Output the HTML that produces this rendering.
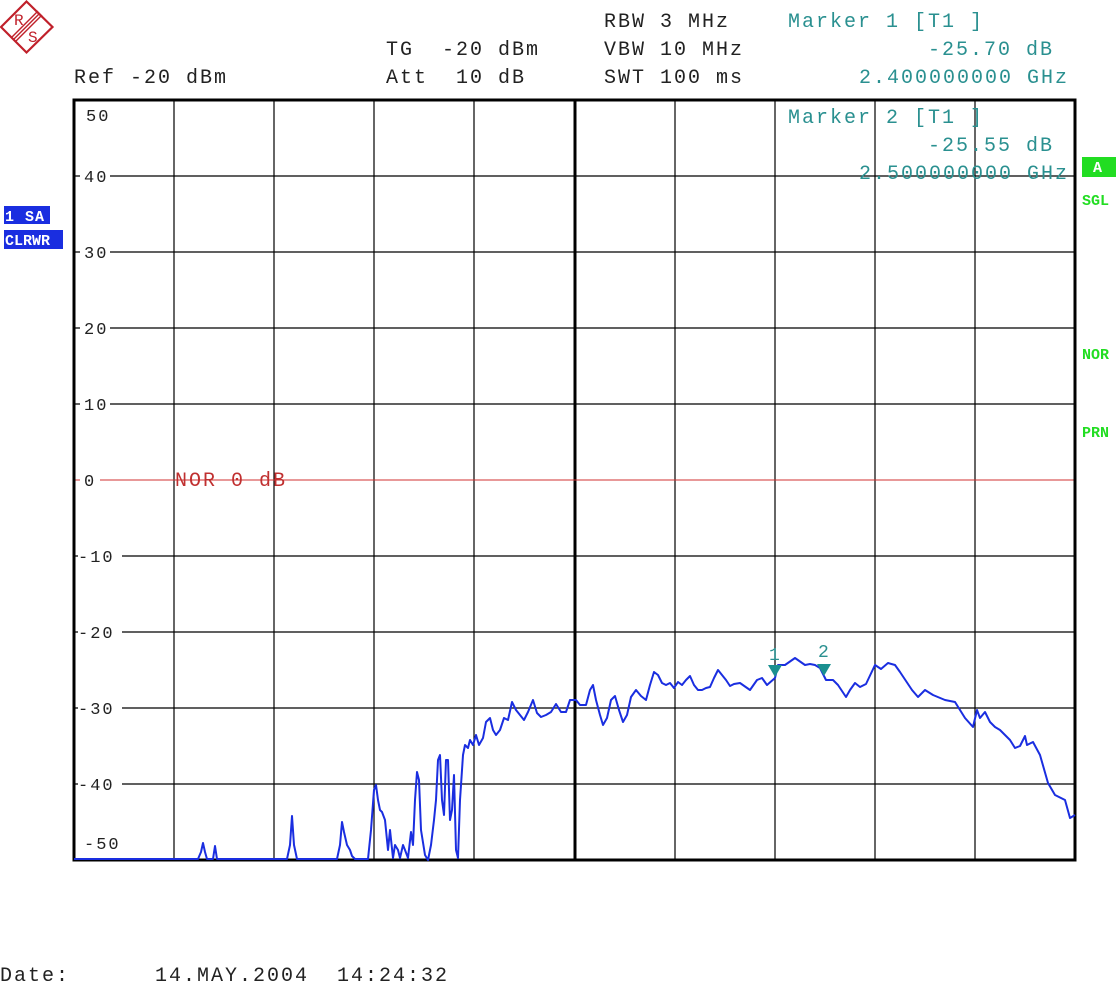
<!DOCTYPE html>
<html><head><meta charset="utf-8"><style>
html,body{margin:0;padding:0;background:#fff;width:1120px;height:986px;overflow:hidden}
svg text{font-family:"Liberation Mono",monospace;font-size:20px;letter-spacing:2px;white-space:pre}
</style></head><body>
<svg width="1120" height="986" viewBox="0 0 1120 986" xmlns="http://www.w3.org/2000/svg" xml:space="preserve">
<!-- logo -->
<polygon points="26.5,1.5 52.5,27 26.5,52.5 1,27" fill="none" stroke="#c0202a" stroke-width="2.2"/>
<g stroke="#c0202a" stroke-width="1.4">
<line x1="11" y1="38" x2="38" y2="11"/><line x1="13" y1="40" x2="40" y2="13"/><line x1="15" y1="42" x2="42" y2="15"/>
</g>
<text x="14" y="25" fill="#c0202a" style="font-size:16px;letter-spacing:0">R</text>
<text x="28" y="42" fill="#c0202a" style="font-size:16px;letter-spacing:0">S</text>

<!-- header -->
<g fill="#222">
<text x="74" y="83">Ref -20 dBm</text>
<text x="386" y="55">TG  -20 dBm</text>
<text x="386" y="83">Att  10 dB</text>
<text x="604" y="27">RBW 3 MHz</text>
<text x="604" y="55">VBW 10 MHz</text>
<text x="604" y="83">SWT 100 ms</text>
<text x="0" y="981">Date:</text>
<text x="155" y="981">14.MAY.2004  14:24:32</text>
</g>

<!-- grid -->
<g stroke="#000" stroke-width="1.2">
<line x1="174" y1="100" x2="174" y2="860"/><line x1="274" y1="100" x2="274" y2="860"/>
<line x1="374" y1="100" x2="374" y2="860"/><line x1="474" y1="100" x2="474" y2="860"/>
<line x1="675" y1="100" x2="675" y2="860"/><line x1="775" y1="100" x2="775" y2="860"/>
<line x1="875" y1="100" x2="875" y2="860"/><line x1="975" y1="100" x2="975" y2="860"/>
<line x1="74" y1="176" x2="1075" y2="176"/><line x1="74" y1="252" x2="1075" y2="252"/>
<line x1="74" y1="328" x2="1075" y2="328"/><line x1="74" y1="404" x2="1075" y2="404"/>
<line x1="74" y1="556" x2="1075" y2="556"/><line x1="74" y1="632" x2="1075" y2="632"/>
<line x1="74" y1="708" x2="1075" y2="708"/><line x1="74" y1="784" x2="1075" y2="784"/>
</g>
<line x1="575" y1="100" x2="575" y2="860" stroke="#000" stroke-width="3"/>
<line x1="74" y1="480" x2="1075" y2="480" stroke="#d03030" stroke-width="1"/>
<rect x="74" y="100" width="1001" height="760" fill="none" stroke="#000" stroke-width="3"/>

<!-- y labels -->
<g fill="#222">
<text x="86" y="121" style="font-size:17px">50</text>
<rect x="80" y="168" width="30" height="16" fill="#fff"/><text x="84" y="182" style="font-size:17px">40</text>
<rect x="80" y="244" width="30" height="16" fill="#fff"/><text x="84" y="258" style="font-size:17px">30</text>
<rect x="80" y="320" width="30" height="16" fill="#fff"/><text x="84" y="334" style="font-size:17px">20</text>
<rect x="80" y="396" width="30" height="16" fill="#fff"/><text x="84" y="410" style="font-size:17px">10</text>
<rect x="80" y="472" width="20" height="16" fill="#fff"/><text x="84" y="486" style="font-size:17px">0</text>
<rect x="78" y="548" width="44" height="16" fill="#fff"/><text x="78" y="562" style="font-size:17px">-10</text>
<rect x="78" y="624" width="44" height="16" fill="#fff"/><text x="78" y="638" style="font-size:17px">-20</text>
<rect x="78" y="700" width="44" height="16" fill="#fff"/><text x="78" y="714" style="font-size:17px">-30</text>
<rect x="78" y="776" width="44" height="16" fill="#fff"/><text x="78" y="790" style="font-size:17px">-40</text>
<text x="84" y="849" style="font-size:17px">-50</text>
</g>
<text x="175" y="486" fill="#c03030">NOR 0 dB</text>

<!-- markers text -->
<g fill="#2a9090">
<text x="788" y="27">Marker 1 [T1 ]</text>
<text x="1054" y="55" text-anchor="end">-25.70 dB</text>
<text x="1069" y="83" text-anchor="end">2.400000000 GHz</text>
<text x="788" y="123">Marker 2 [T1 ]</text>
<text x="1054" y="151" text-anchor="end">-25.55 dB</text>
<text x="1069" y="179" text-anchor="end">2.500000000 GHz</text>
</g>

<!-- side labels -->
<rect x="4" y="206" width="46" height="18" fill="#1a2ee0"/>
<text x="5" y="221" fill="#fff" style="font-size:15px;font-weight:bold;letter-spacing:1px">1 SA</text>
<rect x="4" y="230" width="59" height="19" fill="#1a2ee0"/>
<text x="5" y="245" fill="#fff" style="font-size:15px;font-weight:bold;letter-spacing:0">CLRWR</text>
<rect x="1082" y="157" width="34" height="20" fill="#22dd22"/>
<text x="1093" y="172" fill="#fff" style="font-size:15px;font-weight:bold;letter-spacing:0">A</text>
<g fill="#22dd22">
<text x="1082" y="205" style="font-size:15px;font-weight:bold;letter-spacing:0">SGL</text>
<text x="1082" y="359" style="font-size:15px;font-weight:bold;letter-spacing:0">NOR</text>
<text x="1082" y="437" style="font-size:15px;font-weight:bold;letter-spacing:0">PRN</text>
</g>

<!-- trace -->
<polyline fill="none" stroke="#1a2ee0" stroke-width="2" stroke-linejoin="round" points="74,859 198,859 201,852 203,843 205,852 207,859 213,859 215,846 217,859 287,859 290,845 292,816 294,845 297,859 337,859 340,845 342,822 344,832 347,845 350,850 352,856 355,859 368,859 371,830 374,790 376,785 378,800 380,810 382,812 385,820 388,850 390,830 393,858 395,845 398,850 400,858 403,845 405,850 408,858 411,832 413,845 415,800 417,772 419,780 421,830 425,855 428,860 431,845 434,820 436,800 438,760 440,755 442,800 444,815 446,760 448,760 450,820 452,810 454,775 456,850 458,858 460,800 463,755 465,745 468,748 470,740 473,745 476,735 479,745 483,738 486,722 490,718 493,730 496,735 500,730 504,718 508,720 512,702 516,710 520,715 524,720 528,712 533,700 537,713 541,717 546,715 551,712 556,704 561,712 566,712 570,700 576,700 580,705 586,705 590,690 593,685 596,700 600,715 603,725 607,718 611,700 615,696 619,710 623,722 627,715 631,697 636,690 641,696 646,700 650,685 654,672 658,675 662,683 666,685 670,683 674,688 678,682 682,685 686,680 690,676 694,685 698,690 702,690 706,688 710,687 714,678 718,670 722,675 726,680 730,686 734,684 740,683 750,690 757,680 762,678 767,685 775,678 778,665 785,665 795,658 805,665 810,664 815,665 820,668 826,680 833,680 838,685 846,697 850,690 855,683 860,687 866,684 875,665 881,669 888,663 895,665 900,672 912,690 918,697 925,690 933,695 945,700 955,702 965,718 973,727 977,710 980,718 985,712 990,722 995,727 1000,730 1010,740 1015,748 1020,746 1025,736 1027,745 1033,742 1040,755 1048,783 1055,795 1065,800 1070,818 1075,815"/>

<!-- marker triangles -->
<polygon points="768,665 782,665 775,677" fill="#1a9090"/>
<polygon points="817,664 831,664 824,676" fill="#1a9090"/>
<text x="769" y="660" fill="#2a9090" style="font-size:18px;letter-spacing:0">1</text>
<text x="818" y="657" fill="#2a9090" style="font-size:18px;letter-spacing:0">2</text>
</svg>
</body></html>
